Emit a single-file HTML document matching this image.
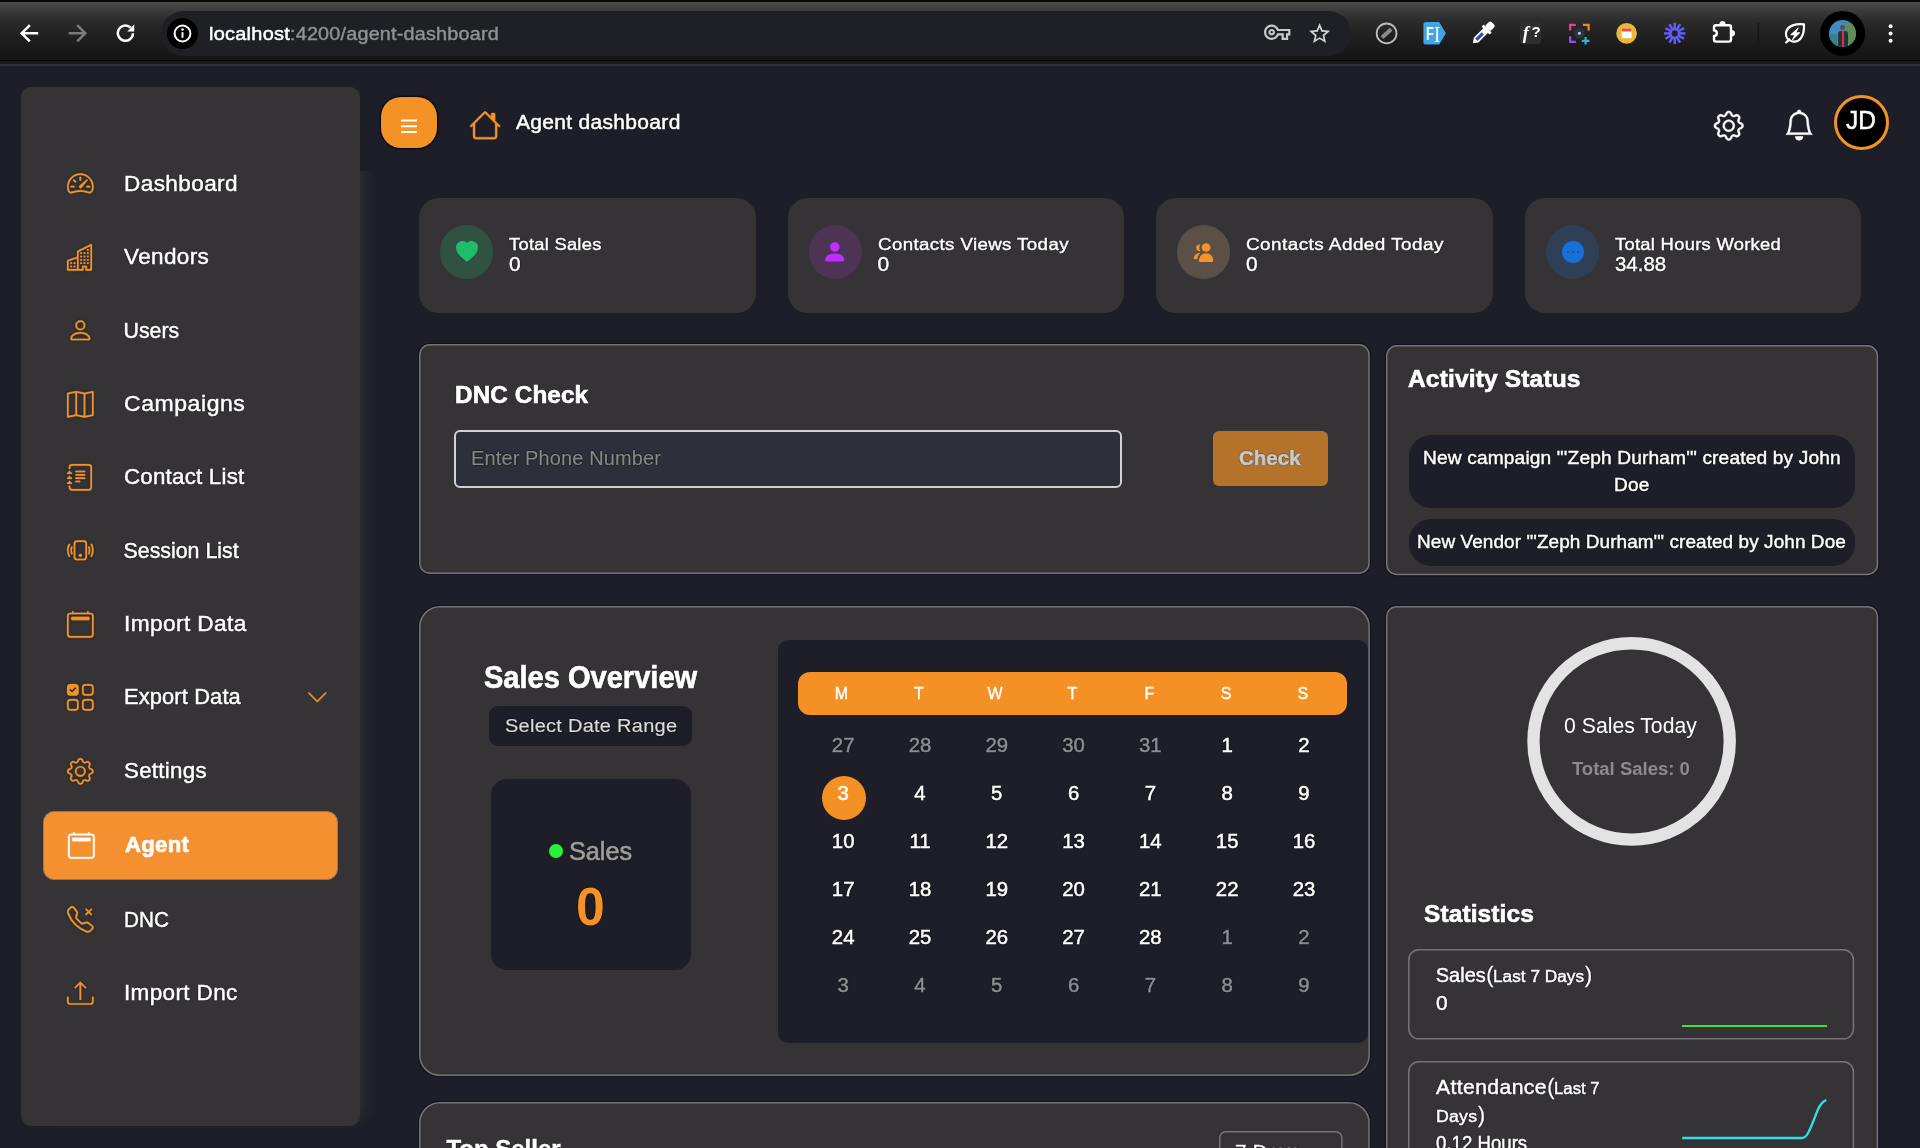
<!DOCTYPE html>
<html lang="en"><head><meta charset="utf-8"><title>Agent dashboard</title>
<style>
html,body{margin:0;padding:0}
body{width:1920px;height:1148px;overflow:hidden;background:#1e1e28;position:relative;font-family:"Liberation Sans",sans-serif;}
#app{position:absolute;left:0;top:0;width:1920px;height:1148px;overflow:hidden;will-change:transform}
.b{position:absolute;box-sizing:border-box}
.t{position:absolute;white-space:pre;font-kerning:normal;transform-origin:0 50%}
.ic{position:absolute;overflow:visible}
.sh{text-shadow:0 0 1px #000,0 0 1px #000,0 0 1.2px #000}
</style></head>
<body>
<div id="app">
<div class="b" style="left:0px;top:0px;width:1920px;height:67px;background:linear-gradient(to bottom,#050505 0,#050505 1.6px,#505050 2px,#4a4a4a 3px,#3c3c3c 10px,#2c2c2c 20px,#232323 32px,#1b1b1b 45px,#141414 59px,#141414 59.6px,#050505 60px,#050505 61.1px,#1b1b1b 61.5px,#1b1b1b 63.8px,#2f2f34 64.2px,#2c2c32 65.5px,#1e1e28 66px);"></div>
<svg class="ic" style="left:0;top:0;width:160px;height:66px" viewBox="0 0 160 66" fill="none" stroke-width="2.45"><path d="M38.2 33.3H22.6M29.8 25.2 21.7 33.3l8.1 8.1" stroke="#fff"/><path d="M68.8 33.3H84.4M77.2 25.2l8.1 8.1-8.1 8.1" stroke="#7c7c7c"/><path d="M133.0 33.2a7.6 7.6 0 1 1-2.3-5.5" stroke="#fff"/><path d="M134.2 24.6v7h-7z" fill="#fff" stroke="none"/></svg>
<div class="b" style="left:160.6px;top:11px;width:1190.6px;height:45.4px;background:#1f2024;border-radius:22.7px;"></div>
<div class="b" style="left:167px;top:17.7px;width:31px;height:31px;background:#000;border-radius:16px;"></div>
<svg class="ic" style="left:167px;top:17.7px;width:31px;height:31px" viewBox="0 0 31 31"><circle cx="15.5" cy="15.5" r="7.9" fill="none" stroke="#fff" stroke-width="2"/><rect x="14.5" y="14.2" width="2" height="5.6" fill="#fff"/><circle cx="15.5" cy="11.6" r="1.25" fill="#fff"/></svg>
<span id="t1" class="t " style="left:209.10px;top:23px;font-size:18.95px;line-height:21px;height:21px;color:#fff;letter-spacing:0.254px;transform:scaleX(1.0517);-webkit-text-stroke:0.5px #fff;">localhost</span>
<span id="t2" class="t " style="left:290.20px;top:23px;font-size:19.00px;line-height:21px;height:21px;color:#929292;letter-spacing:0.189px;transform:scaleX(1.0421);-webkit-text-stroke:0.4px #929292;">:4200/agent-dashboard</span>
<svg class="ic" style="left:1264.4px;top:19.3px;width:26.4px;height:26.4px" viewBox="0 0 24 24" fill="#c9c9c9"><path d="M22 19h-6v-4h-2.68c-1.14 2.42-3.6 4-6.320 4-3.860 0-7-3.140-7-7s3.140-7 7-7c2.720 0 5.170 1.580 6.320 4H24v6h-2v4zm-4-2h2v-4h2v-2H11.940l-.23-.67C11.010 8.340 9.110 7 7 7c-2.760 0-5 2.240-5 5s2.240 5 5 5c2.110 0 4.010-1.340 4.710-3.330l.23-.67H18v4zM7 15c-1.650 0-3-1.350-3-3s1.350-3 3-3 3 1.350 3 3-1.350 3-3 3zm0-4c-.55 0-1 .45-1 1s.45 1 1 1 1-.45 1-1-.45-1-1-1z"/></svg>
<svg class="ic" style="left:1307.3px;top:20.7px;width:25.2px;height:25.2px" viewBox="0 0 24 24" fill="#d4d4d4"><path d="M22 9.24l-7.190-.62L12 2 9.190 8.630 2 9.240l5.460 4.730L5.820 21 12 17.270 18.180 21l-1.630-7.030L22 9.240zM12 15.400l-3.760 2.270 1-4.280-3.320-2.880 4.380-.38L12 6.100l1.710 4.040 4.380.38-3.320 2.880 1 4.280L12 15.400z"/></svg>
<svg class="ic" style="left:1370px;top:15px;width:540px;height:40px" viewBox="1370 15 540 40"><circle cx="1386.6" cy="33.4" r="9.9" fill="none" stroke="#bdbdbd" stroke-width="1.8"/><rect x="1380.4" y="31.4" width="12.4" height="4" rx=".5" fill="#8a8a8a" transform="rotate(-42 1386.6 33.4)"/><path d="M1426 22.1h13.2l6.7 11.2-6.7 11.3H1426a2.600 2.600 0 0 1-2.600-2.600V24.700a2.600 2.600 0 0 1 2.600-2.600z" fill="#3fa4e8"/><g transform="translate(1473.1 43.1) rotate(-45)"><path d="M-.3 0 4.200-3.300H18.500v6.600H4.200z" fill="#fff"/><rect x="17.600" y="-5.700" width="3.100" height="11.400" rx=".8" fill="#fff"/><rect x="20.200" y="-3.800" width="7.800" height="7.600" rx="2.200" fill="#fff"/><rect x="4.600" y="-1.600" width="9.200" height="3.200" rx=".5" fill="#2f4fc2"/></g><rect x="1520" y="22.500" width="21.200" height="21.400" rx="3.200" fill="#2e2e2e"/><g fill="none" stroke-width="2.200"><path d="M1570.200 30.500v-5.600h5.600" stroke="#ec3f8c"/><path d="M1583 24.900h5.600v5.600" stroke="#f08a24"/><path d="M1570.200 36.300v5.600h5.600" stroke="#a04ef0"/><path d="M1581.800 40.800h7.600M1585.600 37v7.600" stroke="#35b3d4"/></g><circle cx="1579.400" cy="33.200" r="5.200" fill="#2c3444"/><circle cx="1579.400" cy="33.200" r="1.500" fill="#c0cadb"/><circle cx="1626.600" cy="33.400" r="10.300" fill="#ebb63c"/><rect x="1621.600" y="28.600" width="10" height="9.600" rx="1.200" fill="#fff"/><rect x="1621.600" y="28.600" width="10" height="3" rx="1" fill="#e0533d"/><g stroke="#625df5" stroke-width="2.500" stroke-linecap="butt"><path d="M1674.750 28.600V22.700" transform="rotate(0 1674.750 33.400)"/><path d="M1674.750 28.600V22.700" transform="rotate(30 1674.750 33.400)"/><path d="M1674.750 28.600V22.700" transform="rotate(60 1674.750 33.400)"/><path d="M1674.750 28.600V22.700" transform="rotate(90 1674.750 33.400)"/><path d="M1674.750 28.600V22.700" transform="rotate(120 1674.750 33.400)"/><path d="M1674.750 28.600V22.700" transform="rotate(150 1674.750 33.400)"/><path d="M1674.750 28.600V22.700" transform="rotate(180 1674.750 33.400)"/><path d="M1674.750 28.600V22.700" transform="rotate(210 1674.750 33.400)"/><path d="M1674.750 28.600V22.700" transform="rotate(240 1674.750 33.400)"/><path d="M1674.750 28.600V22.700" transform="rotate(270 1674.750 33.400)"/><path d="M1674.750 28.600V22.700" transform="rotate(300 1674.750 33.400)"/><path d="M1674.750 28.600V22.700" transform="rotate(330 1674.750 33.400)"/></g><circle cx="1674.750" cy="33.400" r="4.300" fill="none" stroke="#625df5" stroke-width="2.400"/><path d="M1714 27.2a2 2 0 0 1 2-2h13a2 2 0 0 1 2 2v12.400a2 2 0 0 1-2 2H1716a2 2 0 0 1-2-2v-3.600a2.800 2.800 0 0 0 0-5.600z" fill="none" stroke="#fff" stroke-width="2.400" stroke-linejoin="round"/><path d="M1719.300 25.200a3.200 4.200 0 0 1 6.400 0zM1731 30a4 3.200 0 0 1 0 6.400z" fill="#fff"/><rect x="1757.700" y="22.900" width="1.500" height="20.200" fill="#161616"/><path d="M1804 24.300C1797 23.500 1787 25 1786 33c-.400 4 2 7.600 6.500 8.500 6.500 1.300 12.100-4.500 11.500-17.200z" fill="none" stroke="#fff" stroke-width="2.200" stroke-linejoin="round"/><path d="M1789.500 39.500l-3.300 2.900" stroke="#fff" stroke-width="2.200" stroke-linecap="round"/><path d="M1798.300 27.900l-7.600 6.900h4.100l-2.500 5.200 7.500-7.300h-4.100z" fill="#fff" stroke="#fff" stroke-width=".9" stroke-linejoin="round"/><circle cx="1842.600" cy="33.400" r="22.500" fill="#000"/><circle cx="1890.600" cy="26.200" r="2" fill="#fff"/><circle cx="1890.600" cy="33.400" r="2" fill="#fff"/><circle cx="1890.600" cy="40.700" r="2" fill="#fff"/></svg>
<div class="b" style="left:1829px;top:19.8px;width:27.2px;height:27.2px;background:#3f8cc4;border-radius:14px;overflow:hidden;"><div class="b" style="left:16px;top:3px;width:12px;height:25px;background:#5b8f56"></div><div class="b" style="left:0;top:14px;width:8px;height:14px;background:#3a7d8c"></div><div class="b" style="left:8.500px;top:11.500px;width:10.200px;height:16px;background:#26323f;border-radius:3px 3px 0 0"></div><div class="b" style="left:12.600px;top:11.700px;width:2px;height:16px;background:#d83434"></div><div class="b" style="left:10.900px;top:4.900px;width:5.400px;height:5.600px;border-radius:3px;background:#6b4a3a"></div></div>
<span id="t3" class="t " style="left:1425.90px;top:24px;font-size:17.60px;line-height:20px;height:20px;color:#fff;font-weight:700;transform:scaleX(0.7349);-webkit-text-stroke:0.01px #fff;">F</span>
<span class="t" style="left:1434.300px;top:22.600px;font:400 23px/23px 'Liberation Serif',serif;color:#fff;transform:scaleX(.82)">I</span>
<span class="t" style="left:1522.800px;top:21.800px;font:italic 700 18.500px/23px 'Liberation Serif',serif;color:#fff;letter-spacing:-.2px">f</span><span class="t" style="left:1531.600px;top:23.300px;font:700 15px/18px 'Liberation Sans',sans-serif;color:#fff">?</span>
<div class="b" style="left:21.2px;top:86.6px;width:338.8px;height:1039.6px;background:#353336;border-radius:10px;box-shadow:16px 0 20px -8px rgba(255,255,255,.05),6px 0 8px -4px rgba(255,255,255,.035);"></div>
<div class="b" style="left:360px;top:66px;width:1560px;height:105px;background:#1e1e28;"></div>
<div class="b" style="left:43px;top:811px;width:295px;height:68.6px;background:#f49030;border-radius:11px;border:1px solid #8a7a6a;"></div>
<svg class="ic" style="left:66.65px;top:170.25px;width:26.7px;height:26.7px;filter:drop-shadow(0 0 .8px #0a1c33)" viewBox="0 0 16 16" fill="#f49225" stroke="#f49225" stroke-width="0.22" stroke-linejoin="round"><path fill-rule="evenodd" d="M8 4a.5.5 0 0 1 .5.5V6a.5.5 0 0 1-1 0V4.5A.5.5 0 0 1 8 4zM3.732 5.732a.5.5 0 0 1 .707 0l.915.914a.5.5 0 1 1-.708.708l-.914-.915a.5.5 0 0 1 0-.707zM2 10a.5.5 0 0 1 .5-.5h1.586a.5.5 0 0 1 0 1H2.5A.5.5 0 0 1 2 10zm9.5 0a.5.5 0 0 1 .5-.5h1.5a.5.5 0 0 1 0 1H12a.5.5 0 0 1-.5-.5zm.754-4.246a.389.389 0 0 0-.527-.02L7.547 9.31a.91.91 0 1 0 1.302 1.258l3.434-4.297a.389.389 0 0 0-.029-.518z"/><path fill-rule="evenodd" d="M0 10a8 8 0 1 1 15.547 2.661c-.442 1.253-1.845 1.602-2.932 1.25C11.309 13.488 9.475 13 8 13c-1.474 0-3.31.488-4.615.911-1.087.352-2.49.003-2.932-1.25A7.988 7.988 0 0 1 0 10zm8-7a7 7 0 0 0-6.603 9.329c.203.575.923.876 1.68.63C4.397 12.533 6.358 12 8 12s3.604.532 4.923.96c.757.245 1.477-.056 1.68-.631A7 7 0 0 0 8 3z"/></svg>
<span id="t4" class="t sh" style="left:123.50px;top:172px;font-size:21.35px;line-height:24px;height:24px;color:#fff;letter-spacing:0.378px;transform:scaleX(1.0566);-webkit-text-stroke:0.5px #fff;">Dashboard</span>
<svg class="ic" style="left:66.65px;top:243.67px;width:26.7px;height:26.7px;filter:drop-shadow(0 0 .8px #0a1c33)" viewBox="0 0 16 16" fill="#f49225" stroke="#f49225" stroke-width="0.22" stroke-linejoin="round"><path fill-rule="evenodd" d="M14.763.075A.5.5 0 0 1 15 .5v15a.5.5 0 0 1-.5.5h-3a.5.5 0 0 1-.5-.5V14h-1v1.5a.5.5 0 0 1-.5.5h-9a.5.5 0 0 1-.5-.5V10a.5.5 0 0 1 .342-.474L6 7.64V4.5a.5.5 0 0 1 .276-.447l8-4a.5.5 0 0 1 .487.022ZM6 8.694 1 10.36V15h5V8.694ZM7 15h2v-1.5a.5.5 0 0 1 .5-.5h2a.5.5 0 0 1 .5.5V15h2V1.309l-7 3.5V15Z"/><path fill-rule="evenodd" d="M2 11h1v1H2v-1Zm2 0h1v1H4v-1Zm-2 2h1v1H2v-1Zm2 0h1v1H4v-1Zm4-4h1v1H8V9Zm2 0h1v1h-1V9Zm-2 2h1v1H8v-1Zm2 0h1v1h-1v-1Zm2-2h1v1h-1V9Zm0 2h1v1h-1v-1ZM8 7h1v1H8V7Zm2 0h1v1h-1V7Zm2 0h1v1h-1V7ZM8 5h1v1H8V5Zm2 0h1v1h-1V5Zm2 0h1v1h-1V5Zm0-2h1v1h-1V3Z"/></svg>
<span id="t5" class="t sh" style="left:123.50px;top:245px;font-size:21.35px;line-height:24px;height:24px;color:#fff;letter-spacing:0.363px;transform:scaleX(1.0544);-webkit-text-stroke:0.5px #fff;">Vendors</span>
<svg class="ic" style="left:66.65px;top:317.09px;width:26.7px;height:26.7px;filter:drop-shadow(0 0 .8px #0a1c33)" viewBox="0 0 16 16" fill="#f49225" stroke="#f49225" stroke-width="0.22" stroke-linejoin="round"><path fill-rule="evenodd" d="M8 8a3 3 0 1 0 0-6 3 3 0 0 0 0 6Zm2-3a2 2 0 1 1-4 0 2 2 0 0 1 4 0Zm4 8c0 1-1 1-1 1H3s-1 0-1-1 1-4 6-4 6 3 6 4Zm-1-.004c-.001-.246-.154-.986-.832-1.664C11.516 10.68 10.289 10 8 10c-2.29 0-3.516.68-4.168 1.332-.678.678-.83 1.418-.832 1.664h10Z"/></svg>
<span id="t6" class="t sh" style="left:123.50px;top:319px;font-size:21.35px;line-height:24px;height:24px;color:#fff;letter-spacing:0.014px;-webkit-text-stroke:0.5px #fff;">Users</span>
<svg class="ic" style="left:66.65px;top:390.51px;width:26.7px;height:26.7px;filter:drop-shadow(0 0 .8px #0a1c33)" viewBox="0 0 16 16" fill="#f49225" stroke="#f49225" stroke-width="0.22" stroke-linejoin="round"><path fill-rule="evenodd" d="M15.817.113A.5.5 0 0 1 16 .5v14a.5.5 0 0 1-.402.49l-5 1a.502.502 0 0 1-.196 0L5.5 15.01l-4.902.98A.5.5 0 0 1 0 15.5v-14a.5.5 0 0 1 .402-.49l5-1a.5.5 0 0 1 .196 0L10.5.99l4.902-.98a.5.5 0 0 1 .415.103zM10 1.91l-4-.8v12.98l4 .8V1.91zm1 12.98 4-.8V1.11l-4 .8v12.98zm-6-.8V1.11l-4 .8v12.98l4-.8z"/></svg>
<span id="t7" class="t sh" style="left:123.50px;top:392px;font-size:21.35px;line-height:24px;height:24px;color:#fff;letter-spacing:0.525px;transform:scaleX(1.0776);-webkit-text-stroke:0.5px #fff;">Campaigns</span>
<svg class="ic" style="left:66.65px;top:463.93px;width:26.7px;height:26.7px;filter:drop-shadow(0 0 .8px #0a1c33)" viewBox="0 0 16 16" fill="#f49225" stroke="#f49225" stroke-width="0.22" stroke-linejoin="round"><path fill-rule="evenodd" d="M5 10.5a.5.5 0 0 1 .5-.5h2a.5.5 0 0 1 0 1h-2a.5.5 0 0 1-.5-.5zm0-2a.5.5 0 0 1 .5-.5h5a.5.5 0 0 1 0 1h-5a.5.5 0 0 1-.5-.5zm0-2a.5.5 0 0 1 .5-.5h5a.5.5 0 0 1 0 1h-5a.5.5 0 0 1-.5-.5zm0-2a.5.5 0 0 1 .5-.5h5a.5.5 0 0 1 0 1h-5a.5.5 0 0 1-.5-.5z"/><path fill-rule="evenodd" d="M3 0h10a2 2 0 0 1 2 2v12a2 2 0 0 1-2 2H3a2 2 0 0 1-2-2v-1h1v1a1 1 0 0 0 1 1h10a1 1 0 0 0 1-1V2a1 1 0 0 0-1-1H3a1 1 0 0 0-1 1v1H1V2a2 2 0 0 1 2-2z"/><path fill-rule="evenodd" d="M1 5v-.5a.5.5 0 0 1 1 0V5h.5a.5.5 0 0 1 0 1h-2a.5.5 0 0 1 0-1H1zm0 3v-.5a.5.5 0 0 1 1 0V8h.5a.5.5 0 0 1 0 1h-2a.5.5 0 0 1 0-1H1zm0 3v-.5a.5.5 0 0 1 1 0v.5h.5a.5.5 0 0 1 0 1h-2a.5.5 0 0 1 0-1H1z"/></svg>
<span id="t8" class="t sh" style="left:123.50px;top:465px;font-size:21.35px;line-height:24px;height:24px;color:#fff;letter-spacing:0.230px;transform:scaleX(1.0435);-webkit-text-stroke:0.5px #fff;">Contact List</span>
<svg class="ic" style="left:66.65px;top:537.35px;width:26.7px;height:26.7px;filter:drop-shadow(0 0 .8px #0a1c33)" viewBox="0 0 16 16" fill="#f49225" stroke="#f49225" stroke-width="0.22" stroke-linejoin="round"><path fill-rule="evenodd" d="M10 3a1 1 0 0 1 1 1v8a1 1 0 0 1-1 1H6a1 1 0 0 1-1-1V4a1 1 0 0 1 1-1h4zM6 2a2 2 0 0 0-2 2v8a2 2 0 0 0 2 2h4a2 2 0 0 0 2-2V4a2 2 0 0 0-2-2H6z"/><path fill-rule="evenodd" d="M8 12a1 1 0 1 0 0-2 1 1 0 0 0 0 2zM1.599 4.058a.5.5 0 0 1 .208.676A6.967 6.967 0 0 0 1 8c0 1.18.292 2.292.807 3.266a.5.5 0 0 1-.884.468A7.968 7.968 0 0 1 0 8c0-1.347.334-2.619.923-3.734a.5.5 0 0 1 .676-.208zm12.802 0a.5.5 0 0 1 .676.208A7.967 7.967 0 0 1 16 8a7.967 7.967 0 0 1-.923 3.734.5.5 0 0 1-.884-.468A6.967 6.967 0 0 0 15 8c0-1.18-.292-2.292-.807-3.266a.5.5 0 0 1 .208-.676zM3.057 5.534a.5.5 0 0 1 .284.648A4.986 4.986 0 0 0 3 8c0 .642.12 1.255.341 1.818a.5.5 0 1 1-.93.364A5.986 5.986 0 0 1 2 8c0-.769.145-1.505.41-2.182a.5.5 0 0 1 .647-.284zm9.886 0a.5.5 0 0 1 .648.284C13.855 6.495 14 7.231 14 8c0 .769-.145 1.505-.41 2.182a.5.5 0 0 1-.93-.364C12.88 9.255 13 8.642 13 8c0-.642-.12-1.255-.341-1.818a.5.5 0 0 1 .284-.648z"/></svg>
<span id="t9" class="t sh" style="left:123.50px;top:539px;font-size:21.35px;line-height:24px;height:24px;color:#fff;letter-spacing:0.010px;-webkit-text-stroke:0.5px #fff;">Session List</span>
<svg class="ic" style="left:66.65px;top:610.77px;width:26.7px;height:26.7px;filter:drop-shadow(0 0 .8px #0a1c33)" viewBox="0 0 16 16" fill="#f49225" stroke="#f49225" stroke-width="0.22" stroke-linejoin="round"><path fill-rule="evenodd" d="M3.5 0a.5.5 0 0 1 .5.5V1h8V.5a.5.5 0 0 1 1 0V1h1a2 2 0 0 1 2 2v11a2 2 0 0 1-2 2H2a2 2 0 0 1-2-2V3a2 2 0 0 1 2-2h1V.5a.5.5 0 0 1 .5-.5zM2 2a1 1 0 0 0-1 1v11a1 1 0 0 0 1 1h12a1 1 0 0 0 1-1V3a1 1 0 0 0-1-1H2z"/><path fill-rule="evenodd" d="M2.5 4a.5.5 0 0 1 .5-.5h10a.5.5 0 0 1 .5.5v1a.5.5 0 0 1-.5.5H3a.5.5 0 0 1-.5-.5V4z"/></svg>
<span id="t10" class="t sh" style="left:123.50px;top:612px;font-size:21.35px;line-height:24px;height:24px;color:#fff;letter-spacing:0.360px;transform:scaleX(1.0637);-webkit-text-stroke:0.5px #fff;">Import Data</span>
<svg class="ic" style="left:66.65px;top:684.19px;width:26.7px;height:26.7px;filter:drop-shadow(0 0 .8px #0a1c33)" viewBox="0 0 16 16" fill="#f49225" stroke="#f49225" stroke-width="0.22" stroke-linejoin="round"><path fill-rule="evenodd" d="M2 10h3a1 1 0 0 1 1 1v3a1 1 0 0 1-1 1H2a1 1 0 0 1-1-1v-3a1 1 0 0 1 1-1zm9-9h3a1 1 0 0 1 1 1v3a1 1 0 0 1-1 1h-3a1 1 0 0 1-1-1V2a1 1 0 0 1 1-1zm0 9a1 1 0 0 0-1 1v3a1 1 0 0 0 1 1h3a1 1 0 0 0 1-1v-3a1 1 0 0 0-1-1h-3zm0-10a2 2 0 0 0-2 2v3a2 2 0 0 0 2 2h3a2 2 0 0 0 2-2V2a2 2 0 0 0-2-2h-3zM2 9a2 2 0 0 0-2 2v3a2 2 0 0 0 2 2h3a2 2 0 0 0 2-2v-3a2 2 0 0 0-2-2H2zm7 2a2 2 0 0 1 2-2h3a2 2 0 0 1 2 2v3a2 2 0 0 1-2 2h-3a2 2 0 0 1-2-2v-3zM0 2a2 2 0 0 1 2-2h3a2 2 0 0 1 2 2v3a2 2 0 0 1-2 2H2a2 2 0 0 1-2-2V2zm5.354.854a.5.5 0 1 0-.708-.708L3 3.793l-.646-.647a.5.5 0 1 0-.708.708l1 1a.5.5 0 0 0 .708 0l2-2z"/></svg>
<span id="t11" class="t sh" style="left:123.50px;top:685px;font-size:21.35px;line-height:24px;height:24px;color:#fff;letter-spacing:0.140px;transform:scaleX(1.0233);-webkit-text-stroke:0.5px #fff;">Export Data</span>
<svg class="ic" style="left:66.65px;top:757.61px;width:26.7px;height:26.7px;filter:drop-shadow(0 0 .8px #0a1c33)" viewBox="0 0 16 16" fill="#f49225" stroke="#f49225" stroke-width="0.22" stroke-linejoin="round"><path fill-rule="evenodd" d="M8 4.754a3.246 3.246 0 1 0 0 6.492 3.246 3.246 0 0 0 0-6.492zM5.754 8a2.246 2.246 0 1 1 4.492 0 2.246 2.246 0 0 1-4.492 0z"/><path fill-rule="evenodd" d="M9.796 1.343c-.527-1.79-3.065-1.79-3.592 0l-.094.319a.873.873 0 0 1-1.255.52l-.292-.16c-1.64-.892-3.433.902-2.54 2.541l.159.292a.873.873 0 0 1-.52 1.255l-.319.094c-1.79.527-1.79 3.065 0 3.592l.319.094a.873.873 0 0 1 .52 1.255l-.16.292c-.892 1.64.901 3.434 2.541 2.54l.292-.159a.873.873 0 0 1 1.255.52l.094.319c.527 1.79 3.065 1.79 3.592 0l.094-.319a.873.873 0 0 1 1.255-.52l.292.16c1.64.893 3.434-.902 2.54-2.541l-.159-.292a.873.873 0 0 1 .52-1.255l.319-.094c1.79-.527 1.79-3.065 0-3.592l-.319-.094a.873.873 0 0 1-.52-1.255l.16-.292c.893-1.64-.902-3.433-2.541-2.54l-.292.159a.873.873 0 0 1-1.255-.52l-.094-.319zm-2.633.283c.246-.835 1.428-.835 1.674 0l.094.319a1.873 1.873 0 0 0 2.693 1.115l.291-.16c.764-.415 1.6.42 1.184 1.185l-.159.292a1.873 1.873 0 0 0 1.116 2.692l.318.094c.835.246.835 1.428 0 1.674l-.319.094a1.873 1.873 0 0 0-1.115 2.693l.16.291c.415.764-.42 1.6-1.185 1.184l-.291-.159a1.873 1.873 0 0 0-2.693 1.116l-.094.318c-.246.835-1.428.835-1.674 0l-.094-.319a1.873 1.873 0 0 0-2.692-1.115l-.292.16c-.764.415-1.6-.42-1.184-1.185l.159-.291A1.873 1.873 0 0 0 1.945 8.93l-.319-.094c-.835-.246-.835-1.428 0-1.674l.319-.094A1.873 1.873 0 0 0 3.06 4.377l-.16-.292c-.415-.764.42-1.6 1.185-1.184l.292.159a1.873 1.873 0 0 0 2.692-1.115l.094-.319z"/></svg>
<span id="t12" class="t sh" style="left:123.50px;top:759px;font-size:21.35px;line-height:24px;height:24px;color:#fff;letter-spacing:0.261px;transform:scaleX(1.0459);-webkit-text-stroke:0.5px #fff;">Settings</span>
<svg class="ic" style="left:306.05px;top:686.05px;width:22.5px;height:22.5px;" viewBox="0 0 16 16" fill="#f49225" stroke="#f49225" stroke-width="0.22" stroke-linejoin="round"><path fill-rule="evenodd" d="M1.646 4.646a.5.5 0 0 1 .708 0L8 10.293l5.646-5.647a.5.5 0 0 1 .708.708l-6 6a.5.5 0 0 1-.708 0l-6-6a.5.5 0 0 1 0-.708z"/></svg>
<svg class="ic" style="left:67.85px;top:831.95px;width:26.7px;height:26.7px;" viewBox="0 0 16 16" fill="#fff" stroke="#fff" stroke-width="0.22" stroke-linejoin="round"><path fill-rule="evenodd" d="M3.5 0a.5.5 0 0 1 .5.5V1h8V.5a.5.5 0 0 1 1 0V1h1a2 2 0 0 1 2 2v11a2 2 0 0 1-2 2H2a2 2 0 0 1-2-2V3a2 2 0 0 1 2-2h1V.5a.5.5 0 0 1 .5-.5zM2 2a1 1 0 0 0-1 1v11a1 1 0 0 0 1 1h12a1 1 0 0 0 1-1V3a1 1 0 0 0-1-1H2z"/><path fill-rule="evenodd" d="M2.5 4a.5.5 0 0 1 .5-.5h10a.5.5 0 0 1 .5.5v1a.5.5 0 0 1-.5.5H3a.5.5 0 0 1-.5-.5V4z"/></svg>
<span id="t13" class="t n" style="left:124.70px;top:833px;font-size:21.25px;line-height:24px;height:24px;color:#fff;font-weight:700;letter-spacing:0.307px;transform:scaleX(1.0394);-webkit-text-stroke:0.7px #fff;">Agent</span>
<svg class="ic" style="left:66.65px;top:906.15px;width:26.7px;height:26.7px;filter:drop-shadow(0 0 .8px #0a1c33)" viewBox="0 0 16 16" fill="#f49225" stroke="#f49225" stroke-width="0.22" stroke-linejoin="round"><path fill-rule="evenodd" d="M3.654 1.328a.678.678 0 0 0-1.015-.063L1.605 2.3c-.483.484-.661 1.169-.45 1.77a17.568 17.568 0 0 0 4.168 6.608 17.569 17.569 0 0 0 6.608 4.168c.601.211 1.286.033 1.77-.45l1.034-1.034a.678.678 0 0 0-.063-1.015l-2.307-1.794a.678.678 0 0 0-.58-.122l-2.19.547a1.745 1.745 0 0 1-1.657-.459L5.482 8.062a1.745 1.745 0 0 1-.46-1.657l.548-2.19a.678.678 0 0 0-.122-.58L3.654 1.328zM1.884.511a1.745 1.745 0 0 1 2.612.163L6.29 2.98c.329.423.445.974.315 1.494l-.547 2.19a.678.678 0 0 0 .178.643l2.457 2.457a.678.678 0 0 0 .644.178l2.189-.547a1.745 1.745 0 0 1 1.494.315l2.306 1.794c.829.645.905 1.87.163 2.611l-1.034 1.034c-.74.74-1.846 1.065-2.877.702a18.634 18.634 0 0 1-7.01-4.42 18.634 18.634 0 0 1-4.42-7.009c-.362-1.03-.037-2.137.703-2.877L1.885.511z"/><path fill-rule="evenodd" d="M11.146 1.646a.5.5 0 0 1 .708 0L13 2.793l1.146-1.147a.5.5 0 0 1 .708.708L13.707 3.5l1.147 1.146a.5.5 0 0 1-.708.708L13 4.207l-1.146 1.147a.5.5 0 0 1-.708-.708L12.293 3.5l-1.147-1.146a.5.5 0 0 1 0-.708z"/></svg>
<span id="t14" class="t sh" style="left:123.50px;top:908px;font-size:21.35px;line-height:24px;height:24px;color:#fff;letter-spacing:0.007px;transform:scaleX(0.9708);-webkit-text-stroke:0.5px #fff;">DNC</span>
<svg class="ic" style="left:66.65px;top:980.25px;width:26.7px;height:26.7px;filter:drop-shadow(0 0 .8px #0a1c33)" viewBox="0 0 16 16" fill="#f49225" stroke="#f49225" stroke-width="0.22" stroke-linejoin="round"><path fill-rule="evenodd" d="M.5 9.9a.5.5 0 0 1 .5.5v2.5a1 1 0 0 0 1 1h12a1 1 0 0 0 1-1v-2.5a.5.5 0 0 1 1 0v2.5a2 2 0 0 1-2 2H2a2 2 0 0 1-2-2v-2.5a.5.5 0 0 1 .5-.5z"/><path fill-rule="evenodd" d="M7.646 1.146a.5.5 0 0 1 .708 0l3 3a.5.5 0 0 1-.708.708L8.5 2.707V11.5a.5.5 0 0 1-1 0V2.707L5.354 4.854a.5.5 0 1 1-.708-.708l3-3z"/></svg>
<span id="t15" class="t sh" style="left:123.50px;top:981px;font-size:21.35px;line-height:24px;height:24px;color:#fff;letter-spacing:0.328px;transform:scaleX(1.0554);-webkit-text-stroke:0.5px #fff;">Import Dnc</span>
<div class="b" style="left:381px;top:96.8px;width:56.2px;height:51.2px;background:#f49225;border-radius:20px;box-shadow:0 0 1.5px .6px #03031c;"></div>
<svg class="ic" style="left:401px;top:119px;width:16px;height:16px" viewBox="0 0 16 16" fill="#fff"><rect x="0" y="0.5" width="16" height="1.9" rx=".4"/><rect x="0" y="6.3" width="16" height="1.9" rx=".4"/><rect x="0" y="12.1" width="16" height="1.9" rx=".4"/></svg>
<svg class="ic" style="left:468.60px;top:109.20px;width:32.2px;height:32.2px;filter:drop-shadow(0 0 .8px #0a1c33)" viewBox="0 0 16 16" fill="#f49225" stroke="#f49225" stroke-width="0.22" stroke-linejoin="round"><path fill-rule="evenodd" d="M8.707 1.5a1 1 0 0 0-1.414 0L.646 8.146a.5.5 0 0 0 .708.708L2 8.207V13.5A1.5 1.5 0 0 0 3.5 15h9a1.5 1.5 0 0 0 1.500-1.500V8.207l.646.647a.5.5 0 0 0 .708-.708L13 5.793V2.500a.5.5 0 0 0-.5-.5h-1a.5.5 0 0 0-.5.5v1.293L8.707 1.500ZM13 7.207V13.500a.5.5 0 0 1-.5.5h-9a.5.5 0 0 1-.5-.5V7.207l5-5 5 5Z"/></svg>
<span id="t16" class="t sh" style="left:516.40px;top:111px;font-size:20.00px;line-height:22px;height:22px;color:#fff;letter-spacing:0.286px;transform:scaleX(1.0510);-webkit-text-stroke:0.5px #fff;">Agent dashboard</span>
<svg class="ic" style="left:1713.75px;top:110.65px;width:29.5px;height:29.5px;" viewBox="0 0 16 16" fill="#fff" stroke="#fff" stroke-width="0.3" stroke-linejoin="round"><path fill-rule="evenodd" d="M8 4.754a3.246 3.246 0 1 0 0 6.492 3.246 3.246 0 0 0 0-6.492zM5.754 8a2.246 2.246 0 1 1 4.492 0 2.246 2.246 0 0 1-4.492 0z"/><path fill-rule="evenodd" d="M9.796 1.343c-.527-1.79-3.065-1.79-3.592 0l-.094.319a.873.873 0 0 1-1.255.52l-.292-.16c-1.64-.892-3.433.902-2.54 2.541l.159.292a.873.873 0 0 1-.52 1.255l-.319.094c-1.79.527-1.79 3.065 0 3.592l.319.094a.873.873 0 0 1 .52 1.255l-.16.292c-.892 1.64.901 3.434 2.541 2.54l.292-.159a.873.873 0 0 1 1.255.52l.094.319c.527 1.79 3.065 1.79 3.592 0l.094-.319a.873.873 0 0 1 1.255-.52l.292.16c1.64.893 3.434-.902 2.54-2.541l-.159-.292a.873.873 0 0 1 .52-1.255l.319-.094c1.79-.527 1.79-3.065 0-3.592l-.319-.094a.873.873 0 0 1-.52-1.255l.16-.292c.893-1.64-.902-3.433-2.541-2.54l-.292.159a.873.873 0 0 1-1.255-.52l-.094-.319zm-2.633.283c.246-.835 1.428-.835 1.674 0l.094.319a1.873 1.873 0 0 0 2.693 1.115l.291-.16c.764-.415 1.6.42 1.184 1.185l-.159.292a1.873 1.873 0 0 0 1.116 2.692l.318.094c.835.246.835 1.428 0 1.674l-.319.094a1.873 1.873 0 0 0-1.115 2.693l.16.291c.415.764-.42 1.6-1.185 1.184l-.291-.159a1.873 1.873 0 0 0-2.693 1.116l-.094.318c-.246.835-1.428.835-1.674 0l-.094-.319a1.873 1.873 0 0 0-2.692-1.115l-.292.16c-.764.415-1.6-.42-1.184-1.185l.159-.291A1.873 1.873 0 0 0 1.945 8.93l-.319-.094c-.835-.246-.835-1.428 0-1.674l.319-.094A1.873 1.873 0 0 0 3.06 4.377l-.16-.292c-.415-.764.42-1.6 1.185-1.184l.292.159a1.873 1.873 0 0 0 2.692-1.115l.094-.319z"/></svg>
<svg class="ic" style="left:1783.95px;top:110.35px;width:30.3px;height:30.3px;" viewBox="0 0 16 16" fill="#fff" stroke="#fff" stroke-width="0.3" stroke-linejoin="round"><path fill-rule="evenodd" d="M8 16a2 2 0 0 0 2-2H6a2 2 0 0 0 2 2zM8 1.918l-.797.161A4.002 4.002 0 0 0 4 6c0 .628-.134 2.197-.459 3.742-.16.767-.376 1.566-.663 2.258h10.244c-.287-.692-.502-1.49-.663-2.258C12.134 8.197 12 6.628 12 6a4.002 4.002 0 0 0-3.203-3.92L8 1.917zM14.22 12c.223.447.481.801.78 1H1c.299-.199.557-.553.78-1C2.68 10.2 3 6.88 3 6c0-2.42 1.72-4.44 4.005-4.901a1 1 0 1 1 1.99 0A5.002 5.002 0 0 1 13 6c0 .88.32 4.2 1.22 6z"/></svg>
<div class="b" style="left:1834.2px;top:95.3px;width:54.6px;height:54.6px;background:#000;border-radius:28px;border:3.2px solid #f49225;"></div>
<span id="t17" class="t n" style="left:1846.20px;top:105px;font-size:26.35px;line-height:30px;height:30px;color:#fff;letter-spacing:0.013px;transform:scaleX(0.9271);-webkit-text-stroke:0.5px #fff;">JD</span>
<div class="b" style="left:419px;top:197.9px;width:336.5px;height:115.2px;background:#353336;border-radius:20px;"></div>
<div class="b" style="left:440.0px;top:225.3px;width:53.4px;height:53.4px;background:#315242;border-radius:27px;"></div>
<span id="t18" class="t sh" style="left:509.10px;top:234px;font-size:17.32px;line-height:20px;height:20px;color:#fff;letter-spacing:0.256px;transform:scaleX(1.0579);-webkit-text-stroke:0.45px #fff;">Total Sales</span>
<span id="t19" class="t sh" style="left:509.10px;top:252px;font-size:20.97px;line-height:23px;height:23px;color:#fff;-webkit-text-stroke:0.45px #fff;">0</span>
<div class="b" style="left:787.5px;top:197.9px;width:336.5px;height:115.2px;background:#353336;border-radius:20px;"></div>
<div class="b" style="left:808.5px;top:225.3px;width:53.4px;height:53.4px;background:#4d3455;border-radius:27px;"></div>
<span id="t20" class="t sh" style="left:877.60px;top:234px;font-size:17.32px;line-height:20px;height:20px;color:#fff;letter-spacing:0.360px;transform:scaleX(1.0791);-webkit-text-stroke:0.45px #fff;">Contacts Views Today</span>
<span id="t21" class="t sh" style="left:877.60px;top:252px;font-size:20.97px;line-height:23px;height:23px;color:#fff;-webkit-text-stroke:0.45px #fff;">0</span>
<div class="b" style="left:1156px;top:197.9px;width:336.5px;height:115.2px;background:#353336;border-radius:20px;"></div>
<div class="b" style="left:1177.0px;top:225.3px;width:53.4px;height:53.4px;background:#5a5047;border-radius:27px;"></div>
<span id="t22" class="t sh" style="left:1246.10px;top:234px;font-size:17.32px;line-height:20px;height:20px;color:#fff;letter-spacing:0.417px;transform:scaleX(1.0914);-webkit-text-stroke:0.45px #fff;">Contacts Added Today</span>
<span id="t23" class="t sh" style="left:1246.10px;top:252px;font-size:20.97px;line-height:23px;height:23px;color:#fff;-webkit-text-stroke:0.45px #fff;">0</span>
<div class="b" style="left:1524.5px;top:197.9px;width:336.5px;height:115.2px;background:#353336;border-radius:20px;"></div>
<div class="b" style="left:1545.5px;top:225.3px;width:53.4px;height:53.4px;background:#2f3f56;border-radius:27px;"></div>
<span id="t24" class="t sh" style="left:1614.60px;top:234px;font-size:17.32px;line-height:20px;height:20px;color:#fff;letter-spacing:0.276px;transform:scaleX(1.0598);-webkit-text-stroke:0.45px #fff;">Total Hours Worked</span>
<span id="t25" class="t sh" style="left:1614.60px;top:252px;font-size:20.97px;line-height:23px;height:23px;color:#fff;letter-spacing:0.006px;transform:scaleX(0.9733);-webkit-text-stroke:0.45px #fff;">34.88</span>
<svg class="ic" style="left:455.70px;top:241.20px;width:22px;height:22px;" viewBox="0 0 16 16" fill="#1fbd6a" stroke="#1fbd6a" stroke-width="0" stroke-linejoin="round"><path fill-rule="evenodd" d="M8 1.314C12.438-3.248 23.534 4.735 8 15-7.534 4.736 3.562-3.248 8 1.314z"/></svg>
<svg class="ic" style="left:822.00px;top:238.70px;width:25.6px;height:25.6px;" viewBox="0 0 16 16" fill="#c02dff" stroke="#c02dff" stroke-width="0" stroke-linejoin="round"><path fill-rule="evenodd" d="M3 14s-1 0-1-1 1-4 6-4 6 3 6 4-1 1-1 1H3Zm5-6a3 3 0 1 0 0-6 3 3 0 0 0 0 6Z"/></svg>
<svg class="ic" style="left:1190px;top:240px;width:28px;height:26px" viewBox="1190 240 28 26" fill="#f5922a"><circle cx="1206.100" cy="247.500" r="4.350"/><path d="M1199 260.600c0-4.200 3-7.300 7.100-7.300s7.100 3.100 7.100 7.300v.3a1 1 0 0 1-1 1h-12.200a1 1 0 0 1-1-1z"/><path d="M1200.400 244.500a3.400 3.400 0 1 0 0 6.600 5.600 5.600 0 0 1 0-6.600z"/><path d="M1200.300 253.100c-3.700-.2-6.400 2.300-6.400 5.100 0 .6.400 1 1 1h2.400c.2-2.500 1.200-4.700 3-6.100z"/></svg>
<div class="b" style="left:1561.8px;top:241.2px;width:21.8px;height:21.8px;background:#1870d8;border-radius:11px;"></div>
<div class="b" style="left:1566.5px;top:251px;width:2.4px;height:2.4px;background:#1d4a8c;border-radius:2px;"></div>
<div class="b" style="left:1571.5px;top:251px;width:2.4px;height:2.4px;background:#1d4a8c;border-radius:2px;"></div>
<div class="b" style="left:1576.5px;top:251px;width:2.4px;height:2.4px;background:#1d4a8c;border-radius:2px;"></div>
<svg class="ic" style="left:418.6px;top:344.4px;width:950.8px;height:230px" viewBox="0 0 950.8 230"><rect x="0.75" y="0.75" width="949.3" height="228.5" rx="10" fill="none" stroke="#06061a" stroke-opacity=".55" stroke-width="3.5"/><rect x="0.75" y="0.75" width="949.3" height="228.5" rx="10" fill="#353336" stroke="#757476" stroke-width="1.5"/></svg>
<span id="t26" class="t sh" style="left:455.20px;top:381px;font-size:23.95px;line-height:27px;height:27px;color:#fff;font-weight:700;letter-spacing:0.119px;transform:scaleX(1.0130);-webkit-text-stroke:0.7px #fff;">DNC Check</span>
<div class="b" style="left:454px;top:429.6px;width:668px;height:58px;background:#2d2f3b;border-radius:6px;border:2px solid #d2d2d2;"></div>
<span id="t27" class="t sh" style="left:471.20px;top:447px;font-size:19.50px;line-height:22px;height:22px;color:#898987;letter-spacing:0.136px;transform:scaleX(1.0239);-webkit-text-stroke:0.2px #898987;">Enter Phone Number</span>
<div class="b" style="left:1213px;top:430.8px;width:114.8px;height:55.4px;background:#b5722a;border-radius:6px;"></div>
<span id="t28" class="t sh" style="left:1239.40px;top:447px;font-size:20.25px;line-height:22px;height:22px;color:#cbc9c7;font-weight:700;letter-spacing:0.059px;transform:scaleX(1.0075);-webkit-text-stroke:0.7px #cbc9c7;">Check</span>
<svg class="ic" style="left:1385.8px;top:344.6px;width:492.2px;height:230.2px" viewBox="0 0 492.2 230.2"><rect x="0.75" y="0.75" width="490.7" height="228.7" rx="10" fill="none" stroke="#06061a" stroke-opacity=".55" stroke-width="3.5"/><rect x="0.75" y="0.75" width="490.7" height="228.7" rx="10" fill="#353336" stroke="#757476" stroke-width="1.5"/></svg>
<span id="t29" class="t sh" style="left:1408.40px;top:365px;font-size:23.95px;line-height:27px;height:27px;color:#fff;font-weight:700;letter-spacing:0.156px;transform:scaleX(1.0240);-webkit-text-stroke:0.7px #fff;">Activity Status</span>
<div class="b" style="left:1408.8px;top:434.8px;width:446px;height:72.8px;background:#1e1e28;border-radius:22px;"></div>
<div class="b" style="left:1408.8px;top:518.8px;width:446px;height:46.8px;background:#1e1e28;border-radius:22px;"></div>
<span id="t30" class="t sh" style="left:1422.90px;top:447px;font-size:18.67px;line-height:21px;height:21px;color:#fff;letter-spacing:0.137px;transform:scaleX(1.0265);-webkit-text-stroke:0.45px #fff;">New campaign &quot;&#x27;Zeph Durham&#x27;&quot; created by John</span>
<span id="t31" class="t sh" style="left:1613.80px;top:474px;font-size:18.67px;line-height:21px;height:21px;color:#fff;letter-spacing:0.184px;transform:scaleX(1.0199);-webkit-text-stroke:0.45px #fff;">Doe</span>
<span id="t32" class="t sh" style="left:1417.30px;top:531px;font-size:18.67px;line-height:21px;height:21px;color:#fff;letter-spacing:0.082px;transform:scaleX(1.0154);-webkit-text-stroke:0.45px #fff;">New Vendor &quot;&#x27;Zeph Durham&#x27;&quot; created by John Doe</span>
<svg class="ic" style="left:418.5px;top:606.3px;width:950.9px;height:470px" viewBox="0 0 950.9 470"><rect x="0.75" y="0.75" width="949.4" height="468.5" rx="20" fill="none" stroke="#06061a" stroke-opacity=".55" stroke-width="3.5"/><rect x="0.75" y="0.75" width="949.4" height="468.5" rx="20" fill="#353336" stroke="#757476" stroke-width="1.5"/></svg>
<div class="b" style="left:777.6px;top:640px;width:590.8px;height:402.5px;background:#1e1e28;border-radius:10px;"></div>
<span id="t33" class="t sh" style="left:484.15px;top:660px;font-size:30.55px;line-height:34px;height:34px;color:#fff;font-weight:700;transform:scaleX(0.9508);-webkit-text-stroke:0.7px #fff;">Sales Overview</span>
<div class="b" style="left:489.3px;top:705.5px;width:202.7px;height:40.5px;background:#1e1e28;border-radius:9px;"></div>
<span id="t34" class="t sh" style="left:504.60px;top:715px;font-size:18.80px;line-height:21px;height:21px;color:#dcdcdc;letter-spacing:0.259px;transform:scaleX(1.0632);-webkit-text-stroke:0.2px #dcdcdc;">Select Date Range</span>
<div class="b" style="left:490.6px;top:778.7px;width:200px;height:191.7px;background:#1e1e28;border-radius:16px;"></div>
<div class="b" style="left:548.7px;top:843.8px;width:14.6px;height:14.6px;background:#2af03a;border-radius:8px;"></div>
<span id="t35" class="t sh" style="left:569.00px;top:837px;font-size:25.55px;line-height:28px;height:28px;color:#9c9c9c;transform:scaleX(0.9859);-webkit-text-stroke:0.7px #9c9c9c;">Sales</span>
<span id="t36" class="t sh" style="left:576.40px;top:877px;font-size:53.20px;line-height:59px;height:59px;color:#f49225;font-weight:700;transform:scaleX(0.9729);-webkit-text-stroke:0.01px #f49225;">0</span>
<div class="b" style="left:798px;top:671.5px;width:549.2px;height:43.3px;background:#f59124;border-radius:12px;"></div>
<span id="t37" class="t n" style="left:834.75px;top:685px;font-size:16.00px;line-height:17px;height:17px;color:#fff;-webkit-text-stroke:0.4px #fff;">M</span>
<span id="t38" class="t n" style="left:913.90px;top:685px;font-size:16.00px;line-height:17px;height:17px;color:#fff;-webkit-text-stroke:0.4px #fff;">T</span>
<span id="t39" class="t n" style="left:987.40px;top:685px;font-size:16.00px;line-height:17px;height:17px;color:#fff;-webkit-text-stroke:0.4px #fff;">W</span>
<span id="t40" class="t n" style="left:1067.50px;top:685px;font-size:16.00px;line-height:17px;height:17px;color:#fff;-webkit-text-stroke:0.4px #fff;">T</span>
<span id="t41" class="t n" style="left:1144.60px;top:685px;font-size:16.00px;line-height:17px;height:17px;color:#fff;-webkit-text-stroke:0.4px #fff;">F</span>
<span id="t42" class="t n" style="left:1220.70px;top:685px;font-size:16.00px;line-height:17px;height:17px;color:#fff;-webkit-text-stroke:0.4px #fff;">S</span>
<span id="t43" class="t n" style="left:1297.50px;top:685px;font-size:16.00px;line-height:17px;height:17px;color:#fff;-webkit-text-stroke:0.4px #fff;">S</span>
<div class="b" style="left:822.2px;top:775.6px;width:44px;height:44px;background:#f59124;border-radius:22px;"></div>
<span id="t44" class="t sh" style="left:831.85px;top:734px;font-size:20.35px;line-height:22px;height:22px;color:#8e8e95;-webkit-text-stroke:0.5px #8e8e95;">27</span>
<span id="t45" class="t sh" style="left:908.65px;top:734px;font-size:20.35px;line-height:22px;height:22px;color:#8e8e95;-webkit-text-stroke:0.5px #8e8e95;">28</span>
<span id="t46" class="t sh" style="left:985.45px;top:734px;font-size:20.35px;line-height:22px;height:22px;color:#8e8e95;-webkit-text-stroke:0.5px #8e8e95;">29</span>
<span id="t47" class="t sh" style="left:1062.25px;top:734px;font-size:20.35px;line-height:22px;height:22px;color:#8e8e95;-webkit-text-stroke:0.5px #8e8e95;">30</span>
<span id="t48" class="t sh" style="left:1139.05px;top:734px;font-size:20.35px;line-height:22px;height:22px;color:#8e8e95;-webkit-text-stroke:0.5px #8e8e95;">31</span>
<span id="t49" class="t sh" style="left:1221.48px;top:734px;font-size:20.35px;line-height:22px;height:22px;color:#fff;-webkit-text-stroke:0.5px #fff;">1</span>
<span id="t50" class="t sh" style="left:1298.28px;top:734px;font-size:20.35px;line-height:22px;height:22px;color:#fff;-webkit-text-stroke:0.5px #fff;">2</span>
<span id="t51" class="t n" style="left:837.48px;top:782px;font-size:20.35px;line-height:22px;height:22px;color:#fff;-webkit-text-stroke:0.5px #fff;">3</span>
<span id="t52" class="t sh" style="left:914.27px;top:782px;font-size:20.35px;line-height:22px;height:22px;color:#fff;-webkit-text-stroke:0.5px #fff;">4</span>
<span id="t53" class="t sh" style="left:991.08px;top:782px;font-size:20.35px;line-height:22px;height:22px;color:#fff;-webkit-text-stroke:0.5px #fff;">5</span>
<span id="t54" class="t sh" style="left:1067.88px;top:782px;font-size:20.35px;line-height:22px;height:22px;color:#fff;-webkit-text-stroke:0.5px #fff;">6</span>
<span id="t55" class="t sh" style="left:1144.68px;top:782px;font-size:20.35px;line-height:22px;height:22px;color:#fff;-webkit-text-stroke:0.5px #fff;">7</span>
<span id="t56" class="t sh" style="left:1221.48px;top:782px;font-size:20.35px;line-height:22px;height:22px;color:#fff;-webkit-text-stroke:0.5px #fff;">8</span>
<span id="t57" class="t sh" style="left:1298.28px;top:782px;font-size:20.35px;line-height:22px;height:22px;color:#fff;-webkit-text-stroke:0.5px #fff;">9</span>
<span id="t58" class="t sh" style="left:831.85px;top:830px;font-size:20.35px;line-height:22px;height:22px;color:#fff;-webkit-text-stroke:0.5px #fff;">10</span>
<span id="t59" class="t sh" style="left:909.40px;top:830px;font-size:20.35px;line-height:22px;height:22px;color:#fff;-webkit-text-stroke:0.5px #fff;">11</span>
<span id="t60" class="t sh" style="left:985.45px;top:830px;font-size:20.35px;line-height:22px;height:22px;color:#fff;-webkit-text-stroke:0.5px #fff;">12</span>
<span id="t61" class="t sh" style="left:1062.25px;top:830px;font-size:20.35px;line-height:22px;height:22px;color:#fff;-webkit-text-stroke:0.5px #fff;">13</span>
<span id="t62" class="t sh" style="left:1139.05px;top:830px;font-size:20.35px;line-height:22px;height:22px;color:#fff;-webkit-text-stroke:0.5px #fff;">14</span>
<span id="t63" class="t sh" style="left:1215.85px;top:830px;font-size:20.35px;line-height:22px;height:22px;color:#fff;-webkit-text-stroke:0.5px #fff;">15</span>
<span id="t64" class="t sh" style="left:1292.65px;top:830px;font-size:20.35px;line-height:22px;height:22px;color:#fff;-webkit-text-stroke:0.5px #fff;">16</span>
<span id="t65" class="t sh" style="left:831.85px;top:878px;font-size:20.35px;line-height:22px;height:22px;color:#fff;-webkit-text-stroke:0.5px #fff;">17</span>
<span id="t66" class="t sh" style="left:908.65px;top:878px;font-size:20.35px;line-height:22px;height:22px;color:#fff;-webkit-text-stroke:0.5px #fff;">18</span>
<span id="t67" class="t sh" style="left:985.45px;top:878px;font-size:20.35px;line-height:22px;height:22px;color:#fff;-webkit-text-stroke:0.5px #fff;">19</span>
<span id="t68" class="t sh" style="left:1062.25px;top:878px;font-size:20.35px;line-height:22px;height:22px;color:#fff;-webkit-text-stroke:0.5px #fff;">20</span>
<span id="t69" class="t sh" style="left:1139.05px;top:878px;font-size:20.35px;line-height:22px;height:22px;color:#fff;-webkit-text-stroke:0.5px #fff;">21</span>
<span id="t70" class="t sh" style="left:1215.85px;top:878px;font-size:20.35px;line-height:22px;height:22px;color:#fff;-webkit-text-stroke:0.5px #fff;">22</span>
<span id="t71" class="t sh" style="left:1292.65px;top:878px;font-size:20.35px;line-height:22px;height:22px;color:#fff;-webkit-text-stroke:0.5px #fff;">23</span>
<span id="t72" class="t sh" style="left:831.85px;top:926px;font-size:20.35px;line-height:22px;height:22px;color:#fff;-webkit-text-stroke:0.5px #fff;">24</span>
<span id="t73" class="t sh" style="left:908.65px;top:926px;font-size:20.35px;line-height:22px;height:22px;color:#fff;-webkit-text-stroke:0.5px #fff;">25</span>
<span id="t74" class="t sh" style="left:985.45px;top:926px;font-size:20.35px;line-height:22px;height:22px;color:#fff;-webkit-text-stroke:0.5px #fff;">26</span>
<span id="t75" class="t sh" style="left:1062.25px;top:926px;font-size:20.35px;line-height:22px;height:22px;color:#fff;-webkit-text-stroke:0.5px #fff;">27</span>
<span id="t76" class="t sh" style="left:1139.05px;top:926px;font-size:20.35px;line-height:22px;height:22px;color:#fff;-webkit-text-stroke:0.5px #fff;">28</span>
<span id="t77" class="t sh" style="left:1221.48px;top:926px;font-size:20.35px;line-height:22px;height:22px;color:#8e8e95;-webkit-text-stroke:0.5px #8e8e95;">1</span>
<span id="t78" class="t sh" style="left:1298.28px;top:926px;font-size:20.35px;line-height:22px;height:22px;color:#8e8e95;-webkit-text-stroke:0.5px #8e8e95;">2</span>
<span id="t79" class="t sh" style="left:837.48px;top:974px;font-size:20.35px;line-height:22px;height:22px;color:#8e8e95;-webkit-text-stroke:0.5px #8e8e95;">3</span>
<span id="t80" class="t sh" style="left:914.27px;top:974px;font-size:20.35px;line-height:22px;height:22px;color:#8e8e95;-webkit-text-stroke:0.5px #8e8e95;">4</span>
<span id="t81" class="t sh" style="left:991.08px;top:974px;font-size:20.35px;line-height:22px;height:22px;color:#8e8e95;-webkit-text-stroke:0.5px #8e8e95;">5</span>
<span id="t82" class="t sh" style="left:1067.88px;top:974px;font-size:20.35px;line-height:22px;height:22px;color:#8e8e95;-webkit-text-stroke:0.5px #8e8e95;">6</span>
<span id="t83" class="t sh" style="left:1144.68px;top:974px;font-size:20.35px;line-height:22px;height:22px;color:#8e8e95;-webkit-text-stroke:0.5px #8e8e95;">7</span>
<span id="t84" class="t sh" style="left:1221.48px;top:974px;font-size:20.35px;line-height:22px;height:22px;color:#8e8e95;-webkit-text-stroke:0.5px #8e8e95;">8</span>
<span id="t85" class="t sh" style="left:1298.28px;top:974px;font-size:20.35px;line-height:22px;height:22px;color:#8e8e95;-webkit-text-stroke:0.5px #8e8e95;">9</span>
<svg class="ic" style="left:1385.8px;top:606.2px;width:492.2px;height:600px" viewBox="0 0 492.2 600"><rect x="0.75" y="0.75" width="490.7" height="598.5" rx="9.5" fill="none" stroke="#06061a" stroke-opacity=".55" stroke-width="3.5"/><rect x="0.75" y="0.75" width="490.7" height="598.5" rx="9.5" fill="#353336" stroke="#757476" stroke-width="1.5"/></svg>
<svg class="ic" style="left:1521px;top:631px;width:221px;height:221px" viewBox="1521 631 221 221"><circle cx="1631.600" cy="741.400" r="98.150" fill="none" stroke="#e3e3e3" stroke-width="12.300"/></svg>
<span id="t86" class="t n" style="left:1564.10px;top:714px;font-size:21.19px;line-height:23px;height:23px;color:#fff;">0 Sales Today</span>
<span id="t87" class="t n" style="left:1571.90px;top:758px;font-size:18.52px;line-height:21px;height:21px;color:#8b8b8b;font-weight:700;-webkit-text-stroke:0.01px #8b8b8b;">Total Sales: 0</span>
<span id="t88" class="t sh" style="left:1424.40px;top:900px;font-size:23.95px;line-height:27px;height:27px;color:#fff;font-weight:700;letter-spacing:0.133px;transform:scaleX(1.0201);-webkit-text-stroke:0.7px #fff;">Statistics</span>
<svg class="ic" style="left:1408.4px;top:949.2px;width:446.2px;height:90.6px" viewBox="0 0 446.2 90.6"><rect x="0.75" y="0.75" width="444.7" height="89.1" rx="10" fill="none" stroke="#757476" stroke-width="1.5"/></svg>
<svg class="ic" style="left:1408.4px;top:1061.4px;width:446.2px;height:120px" viewBox="0 0 446.2 120"><rect x="0.75" y="0.75" width="444.7" height="118.5" rx="10" fill="none" stroke="#757476" stroke-width="1.5"/></svg>
<span id="t89" class="t sh" style="left:1435.65px;top:964px;font-size:20.00px;line-height:22px;height:22px;color:#fff;letter-spacing:0.036px;-webkit-text-stroke:0.5px #fff;">Sales</span>
<span id="t90" class="t sh" style="left:1486.30px;top:963px;font-size:21.35px;line-height:24px;height:24px;color:#fff;-webkit-text-stroke:0.3px #fff;">(</span>
<span id="t91" class="t sh" style="left:1493.15px;top:966px;font-size:17.30px;line-height:20px;height:20px;color:#fff;letter-spacing:0.022px;transform:scaleX(0.9951);-webkit-text-stroke:0.5px #fff;">Last 7 Days</span>
<span id="t92" class="t sh" style="left:1584.90px;top:963px;font-size:21.35px;line-height:24px;height:24px;color:#fff;-webkit-text-stroke:0.3px #fff;">)</span>
<span id="t93" class="t sh" style="left:1436.10px;top:991px;font-size:20.95px;line-height:23px;height:23px;color:#fff;-webkit-text-stroke:0.5px #fff;">0</span>
<div class="b" style="left:1682.2px;top:1025px;width:145px;height:2.1px;background:#3fe23a;"></div>
<span id="t94" class="t sh" style="left:1436.10px;top:1076px;font-size:20.00px;line-height:22px;height:22px;color:#fff;letter-spacing:0.345px;transform:scaleX(1.0600);-webkit-text-stroke:0.5px #fff;">Attendance</span>
<span id="t95" class="t sh" style="left:1547.20px;top:1075px;font-size:21.35px;line-height:24px;height:24px;color:#fff;-webkit-text-stroke:0.3px #fff;">(</span>
<span id="t96" class="t sh" style="left:1554.10px;top:1078px;font-size:17.30px;line-height:20px;height:20px;color:#fff;letter-spacing:0.020px;transform:scaleX(0.9672);-webkit-text-stroke:0.5px #fff;">Last 7</span>
<span id="t97" class="t sh" style="left:1436.10px;top:1106px;font-size:17.30px;line-height:20px;height:20px;color:#fff;letter-spacing:0.211px;transform:scaleX(1.0263);-webkit-text-stroke:0.5px #fff;">Days</span>
<span id="t98" class="t sh" style="left:1478.00px;top:1103px;font-size:21.35px;line-height:24px;height:24px;color:#fff;-webkit-text-stroke:0.3px #fff;">)</span>
<span id="t99" class="t sh" style="left:1436.10px;top:1131px;font-size:20.95px;line-height:23px;height:23px;color:#fff;letter-spacing:0.017px;transform:scaleX(0.8888);-webkit-text-stroke:0.5px #fff;">0.12 Hours</span>
<svg class="ic" style="left:1675px;top:1090px;width:160px;height:58px" viewBox="1675 1090 160 58"><path d="M1682.200 1138H1802c4.500 0 7-6 11-16s6.500-19.500 13.300-22" fill="none" stroke="#2ee0e8" stroke-width="2.300"/></svg>
<svg class="ic" style="left:418.6px;top:1101.8px;width:950.8px;height:120px" viewBox="0 0 950.8 120"><rect x="0.75" y="0.75" width="949.3" height="118.5" rx="20" fill="none" stroke="#06061a" stroke-opacity=".55" stroke-width="3.5"/><rect x="0.75" y="0.75" width="949.3" height="118.5" rx="20" fill="#353336" stroke="#757476" stroke-width="1.5"/></svg>
<span id="t100" class="t sh" style="left:446.40px;top:1135px;font-size:24.05px;line-height:27px;height:27px;color:#fff;font-weight:700;letter-spacing:-0.026px;-webkit-text-stroke:0.5px #fff;">Top Seller</span>
<svg class="ic" style="left:1218.6px;top:1130.6px;width:123.6px;height:60px" viewBox="0 0 123.6 60"><rect x="0.75" y="0.75" width="122.1" height="58.5" rx="6" fill="none" stroke="#757476" stroke-width="1.5"/></svg>
<span id="t101" class="t sh" style="left:1235.40px;top:1141px;font-size:20.10px;line-height:22px;height:22px;color:#fff;letter-spacing:0.154px;transform:scaleX(1.0308);-webkit-text-stroke:0.3px #fff;">7 Days</span>
</div>
</body></html>
